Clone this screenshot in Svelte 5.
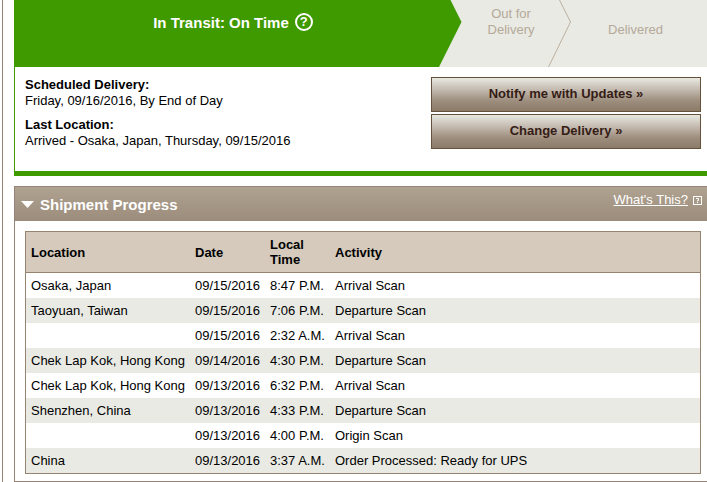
<script lang="ts">
  interface Scan {
    location: string;
    date: string;
    time: string;
    activity: string;
  }

  const scans: Scan[] = [
    { location: 'Osaka, Japan', date: '09/15/2016', time: '8:47 P.M.', activity: 'Arrival Scan' },
    { location: 'Taoyuan, Taiwan', date: '09/15/2016', time: '7:06 P.M.', activity: 'Departure Scan' },
    { location: '', date: '09/15/2016', time: '2:32 A.M.', activity: 'Arrival Scan' },
    { location: 'Chek Lap Kok, Hong Kong', date: '09/14/2016', time: '4:30 P.M.', activity: 'Departure Scan' },
    { location: 'Chek Lap Kok, Hong Kong', date: '09/13/2016', time: '6:32 P.M.', activity: 'Arrival Scan' },
    { location: 'Shenzhen, China', date: '09/13/2016', time: '4:33 P.M.', activity: 'Departure Scan' },
    { location: '', date: '09/13/2016', time: '4:00 P.M.', activity: 'Origin Scan' },
    { location: 'China', date: '09/13/2016', time: '3:37 A.M.', activity: 'Order Processed: Ready for UPS' },
  ];

  let open = $state(true);
</script>

<main class="page">
  <section class="status">
    <div class="tracker">
      <div class="step current">
        <span>In Transit: On Time</span>
        <button class="help" type="button" aria-label="Status help">?</button>
      </div>
      <svg class="arrow" viewBox="0 0 23 67" aria-hidden="true">
        <path d="M0 0H11.5L22.5 22L0 67Z" fill="#3f9a00" />
      </svg>
      <div class="step out">Out for<br />Delivery</div>
      <svg class="arrow" viewBox="0 0 23 67" aria-hidden="true">
        <path d="M11.5 0L22.5 22L0.5 67" fill="none" stroke="#bbb0a0" />
      </svg>
      <div class="step done">Delivered</div>
    </div>

    <div class="summary">
      <dl>
        <dt>Scheduled Delivery:</dt>
        <dd>Friday, 09/16/2016, By End of Day</dd>
        <dt>Last Location:</dt>
        <dd>Arrived - Osaka, Japan, Thursday, 09/15/2016</dd>
      </dl>
      <div class="actions">
        <button class="btn" type="button">Notify me with Updates »</button>
        <button class="btn" type="button">Change Delivery »</button>
      </div>
    </div>
  </section>

  <section class="progress">
    <header class="bar">
      <button class="toggle" type="button" aria-expanded={open} onclick={() => (open = !open)}>
        <svg class="caret" class:closed={!open} viewBox="0 0 13 7" aria-hidden="true">
          <path d="M0 0H13L6.5 7Z" fill="#fff" />
        </svg>
        Shipment Progress
      </button>
      <div class="hint">
        <a href="#help">What's This?</a>
        <svg class="hint-icon" viewBox="0 0 9 9" aria-hidden="true">
          <rect x="0.5" y="0.5" width="8" height="8" fill="none" stroke="#fff" />
          <path d="M3 2.5H5.5V4.5H4.5V5.5M4.5 6V7" fill="none" stroke="#fff" />
        </svg>
      </div>
    </header>

    {#if open}
      <div class="table-wrap">
        <table>
          <thead>
            <tr>
              <th class="col-location">Location</th>
              <th class="col-date">Date</th>
              <th class="col-time">Local Time</th>
              <th>Activity</th>
            </tr>
          </thead>
          <tbody>
            {#each scans as scan}
              <tr>
                <td>{scan.location}</td>
                <td>{scan.date}</td>
                <td>{scan.time}</td>
                <td>{scan.activity}</td>
              </tr>
            {/each}
          </tbody>
        </table>
      </div>
    {/if}
  </section>
</main>

<style>
  :global(body) {
    background: #fff;
    color: #000;
    font: 13px/16px "Liberation Sans", Arial, Helvetica, sans-serif;
  }

  .page {
    margin-left: 2px;
    padding-left: 11px;
    border-left: 1px solid #948478;
  }

  button { font-family: inherit; cursor: pointer; }

  /* status panel */
  .status {
    border-left: 1px solid #3f9a00;
    border-bottom: 5px solid #3f9a00;
  }

  .tracker {
    display: flex;
    height: 67px;
    background: #e9eae4;
    color: #b5a999;
  }
  .step { box-sizing: border-box; padding-top: 6px; text-align: center; }
  .current {
    flex: 1;
    display: flex;
    align-items: flex-start;
    justify-content: center;
    gap: 6px;
    padding-top: 13px;
    padding-left: 12px;
    background: #3f9a00;
    color: #fff;
    font-size: 15px;
    line-height: 19px;
    font-weight: bold;
  }
  .out  { width: 86px; padding-left: 12px; }
  .done { width: 136px; padding-top: 22px; padding-right: 7px; }
  .arrow { display: block; width: 23px; height: 67px; flex-shrink: 0; }

  .help {
    box-sizing: border-box;
    width: 18px;
    height: 18px;
    padding: 0;
    border: 2px solid #fff;
    border-radius: 50%;
    background: transparent;
    color: #fff;
    font-size: 13px;
    line-height: 14px;
    font-weight: bold;
  }

  .summary {
    display: flex;
    justify-content: space-between;
    padding: 10px 6px 22px 10px;
  }
  dl { margin: 0; }
  dt { font-weight: bold; }
  dd { margin: 0 0 8px; }
  dd:last-child { margin-bottom: 0; }

  .actions { display: flex; flex-direction: column; gap: 2px; width: 270px; }
  .btn {
    height: 35px;
    padding: 0 0 2px;
    border: 1px solid #66523a;
    background: linear-gradient(#e8e9e1, #c4bab0 35%, #9c8d7c 70%, #8c7b69);
    color: #351c15;
    font-size: 13px;
    font-weight: bold;
  }

  /* shipment progress */
  .progress {
    margin-top: 10px;
    border: 1px solid #948478;
    border-right: 0;
  }

  .bar {
    display: flex;
    justify-content: space-between;
    height: 34px;
    padding: 0 5px 0 6px;
    background: linear-gradient(#b0a291, #9b8c7b);
    color: #fff;
  }
  .toggle {
    display: flex;
    align-items: center;
    gap: 6px;
    padding: 0;
    border: 0;
    background: none;
    color: inherit;
    font-size: 15px;
    font-weight: bold;
  }
  .caret { width: 13px; height: 7px; }
  .caret.closed { transform: rotate(-90deg); }

  .hint { display: flex; align-items: center; gap: 5px; height: 26px; }
  .hint a { color: #fff; }
  .hint-icon { width: 9px; height: 9px; }

  .table-wrap { padding: 10px 6px 7px 10px; }
  table {
    width: 100%;
    border: 1px solid #948470;
    border-spacing: 0;
    table-layout: fixed;
  }
  th, td { box-sizing: border-box; padding: 0 5px; text-align: left; }
  th {
    height: 41px;
    border-bottom: 1px solid #948470;
    background: #d5cabc;
    line-height: 15px;
  }
  td { height: 25px; white-space: nowrap; }
  tbody tr:nth-child(even) { background: #e9eae4; }

  .col-location { width: 164px; }
  .col-date     { width: 75px; }
  .col-time     { width: 65px; }
</style>
